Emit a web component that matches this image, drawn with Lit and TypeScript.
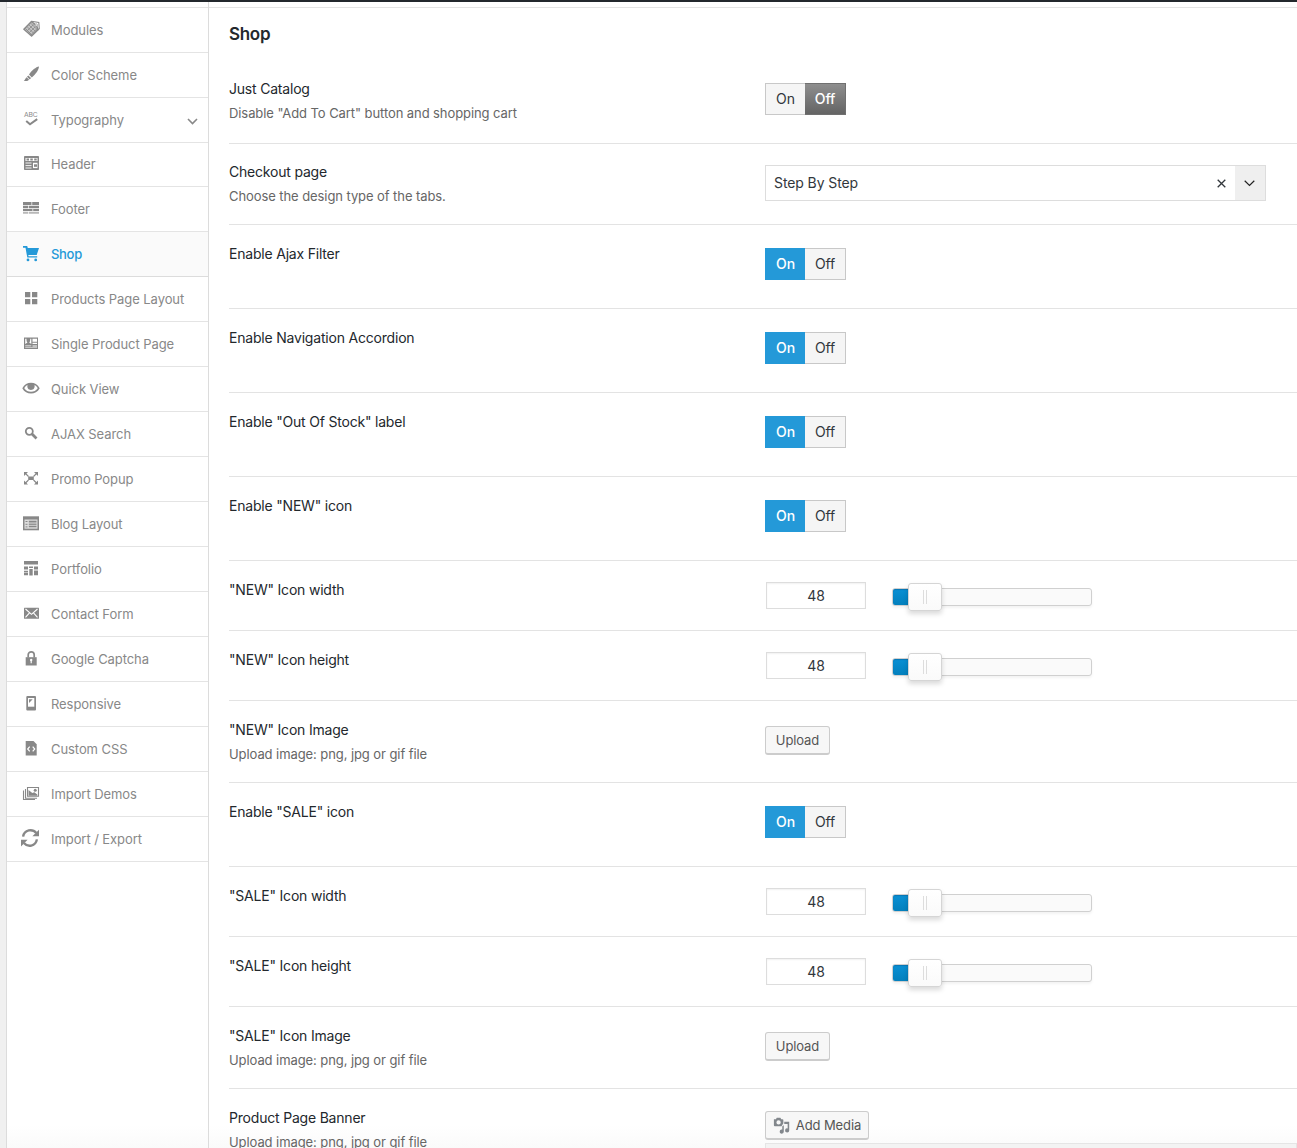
import { LitElement, html, svg, css } from "lit";
import { customElement, property } from "lit/decorators.js";
import { classMap } from "lit/directives/class-map.js";

const icons: Record<string, unknown> = {
  tag: svg`<path d="M2.900 10.300 10.500 2.500 15.500 6.500 17 10.600 10.600 17z" fill="#c4c4c4" stroke="#8a8a8a" stroke-width="1.500" stroke-linejoin="round"/><path d="M4.500 9.500l6.500 6.500M6.200 7.800l6.500 6.500M8 6l6.500 6.500M9.800 4.200l6.500 6.500M5.500 12.500l7-7M7.500 14.500l7-7M9.500 16.200l6.500-6.500" stroke="#8a8a8a" stroke-width=".8" fill="none"/><path d="M10.500 2.300l7.300 1.200.5 6.300-1.600 1.200" stroke="#8a8a8a" stroke-width="1.100" fill="none"/><circle cx="15.200" cy="6" r="1.200" fill="#fff" stroke="#8a8a8a" stroke-width=".7"/>`,
  brush: svg`<path d="M18 2.600C15 3 10.800 6.500 8 10.600L10.800 13.400C14.500 10.700 17.800 6 18 2.600zM7.300 11.400 10 14.100 8.800 15.400 6 12.800zM5.600 13.200 8 15.600C7 17.500 4.600 17.200 2.700 16.800 4 16.200 4.200 14.300 5.600 13.200z"/>`,
  abc: svg`<text x="2.900" y="7.900" font-size="6.200" textLength="13.800" lengthAdjust="spacingAndGlyphs" font-family="Inter, sans-serif">ABC</text><path d="M5.200 12 9 15.300 16.200 10.100" fill="none" stroke="currentColor" stroke-width="2"/>`,
  header: svg`<rect x="3" y="3" width="15" height="14" rx=".8"/><path d="M4.500 5h12v3h-12z" fill="#fff"/><path d="M5.500 6.500h2.500M9.300 6.500h2.500M13.200 6.500h2.500" stroke="currentColor" stroke-width="1.800"/><path d="M4.500 10h6M4.500 12.600h6M4.500 15h6" stroke="#fff" stroke-width=".9"/><path d="M12 9.800h4.500v5.300H12z" fill="#fff"/><path d="M13 11.300h3v2.500h-3z"/>`,
  footer: svg`<path d="M2 4h8.500v2.900H2zM11.200 4h6.800v2.900h-6.800zM2 7.700h5v2.500H2zM7.700 7.700H18v2.500H7.700zM2 11h9.500v2H2zM12.200 11H18v2h-5.800z"/><path d="M2 13.800h5v1.900H2zM7.700 13.800H18v1.900H7.700z" opacity=".6"/>`,
  cart: svg`<path d="M2 3h4.200l.6 2H18l-2.300 7H7.300l.3 1.200h8.600v1.400H6.300L4.500 4.700H2z"/><circle cx="7" cy="16.900" r="1.400"/><circle cx="14.700" cy="16.900" r="1.400"/>`,
  grid: svg`<path d="M4 4h5.300v5.300H4zM11 4h5.300v5.300H11zM4 11h5.300v5.300H4zM11 11h5.300v5.300H11z"/>`,
  product: svg`<path d="M3 4.500h14v11.500H3z"/><path d="M4.200 5.700h1.300c-.2 2 .3 3.200 1 3.800L4.200 11zM10.300 5.700H9.200c.1 2-.3 3.200-1 3.800l2.100 1.500zM11.500 5.700h4.500v3h-4.500zM11.500 9.800h4.500v1.300h-4.500zM4.200 12.500h6.100v.8H4.200zM11.500 12.400h4.500v1h-4.500zM4.200 14.400h11.800v.6H4.200z" fill="#fff"/>`,
  eye: svg`<path fill-rule="evenodd" d="M1.300 10.300C3.300 6.500 6.500 4.800 10 4.800s6.700 1.700 8.700 5.500C16.700 14 13.500 15.600 10 15.600S3.300 14 1.300 10.300zM3.300 10.200c1.500 2.500 4 3.500 6.700 3.500s5.200-1 6.700-3.500c-.8-1.500-1.900-2.500-3.200-3.100.6 3-.8 4.900-3.500 4.900S5.900 10.100 6.500 7.100C5.200 7.700 4.100 8.700 3.300 10.200z"/>`,
  search: svg`<circle cx="8.300" cy="8.300" r="3.500" fill="none" stroke="currentColor" stroke-width="1.800"/><path d="M10.800 10.800l4.700 4.700" stroke="currentColor" stroke-width="2.700"/>`,
  popup: svg`<path d="M7.200 8.500h5.600v3.600H7.200zM3 4h4L3 8zM17 4h-4l4 4zM3 16.500h4l-4-4zM17 16.500h-4l4-4z"/><path d="M4 5l3.500 3.500M16 5l-3.500 3.500M4 15.500 7.500 12M16 15.500 12.500 12" stroke="currentColor" stroke-width="1.100"/>`,
  blog: svg`<path d="M2 3.300h16v14H2z"/><path d="M3.500 6.500h13v9.200h-13z" fill="#ddd"/><path d="M4.500 8.500h2M4.500 11.300h2M4.500 13.900h2" stroke="currentColor" stroke-width="1"/><path d="M7.800 8.700h7.700M7.800 13.500h7.700" stroke="currentColor" stroke-width="1.700"/><path d="M7.800 11.200h7.700" stroke="currentColor" stroke-width="1.300"/>`,
  portfolio: svg`<path d="M3 3h14v3.600H3zM3 8.500h4v3H3zM8 8.500h4V10H8zM13 8.500h4v3h-4zM3 12.700h4v1.200H3zM8.300 11h3.400v6.400H8.300zM3 14.600h4v2.600H3zM13 12.600h4v4.600h-4z"/>`,
  mail: svg`<rect x="3" y="4.700" width="15" height="11" rx=".5"/><path d="M4.500 6l6 5.300 6-5.300M4.500 14.300l3.800-4.200M16.500 14.300l-3.800-4.200" fill="none" stroke="#fff" stroke-width="1.100"/>`,
  lock: svg`<path d="M4.700 9.200h11v8.300h-11z"/><path d="M7.200 9.500V6.800c0-4 6-4 6 0v2.700" fill="none" stroke="currentColor" stroke-width="1.700"/><circle cx="10.200" cy="12" r="1.200" fill="#fff"/><path d="M9.600 12h1.200v3.300H9.600z" fill="#fff"/>`,
  phone: svg`<rect x="5.300" y="3" width="9.700" height="14.500" rx="1"/><path d="M7 5h6.300v8.700H7z" fill="#fff"/><path d="M8 6.200h3.700L8 10z"/>`,
  code: svg`<path d="M4.700 3h7.800l3.200 3.200v11.300h-11z"/><path d="M8.700 8.700 6.700 11l2 2.300M11.700 8.700l2 2.300-2 2.300" fill="none" stroke="#fff" stroke-width="1.200"/>`,
  images: svg`<path d="M6.500 4.500h11v8.800h-11zM4.500 6v9.200h11.500M2.500 7.500v9h11.500" fill="none" stroke="currentColor" stroke-width="1.100"/><path d="M7.500 7l3.800 3 2-.8 3 2.300v1.200H7.500z"/><circle cx="14.200" cy="7.300" r="1.500"/>`,
  sync: svg`<path d="M2.100 8.600C3.300 1.500 11.500.5 15.300 5M15.900 11.400C14.600 18.500 6.700 19.500 2.900 15" fill="none" stroke="currentColor" stroke-width="2.400"/><path d="M18 1.700v6.600h-6.600zM0 18.400v-6.600h6.600z"/>`,
  media: svg`<path fill-rule="evenodd" d="M1 3.500h2.200L4.200 2h4l1 1.500h1.300c.6 0 1 .4 1 1V8l-2 3.300H2c-.6 0-1-.4-1-1zM6.200 4.700a2.400 2.400 0 1 0 0 4.800 2.400 2.400 0 0 0 0-4.800z"/><path d="M12.500 6.500H18V16a2.300 2.300 0 1 1-1.700-2.200V9h-3.800z"/><path d="M10.300 11.500 12 10.300v7a2.300 2.300 0 1 1-1.700-2.200z"/>`,
};

const menu: [string, string][] = [
  ["tag", "Modules"], ["brush", "Color Scheme"], ["abc", "Typography"], ["header", "Header"],
  ["footer", "Footer"], ["cart", "Shop"], ["grid", "Products Page Layout"], ["product", "Single Product Page"],
  ["eye", "Quick View"], ["search", "AJAX Search"], ["popup", "Promo Popup"], ["blog", "Blog Layout"],
  ["portfolio", "Portfolio"], ["mail", "Contact Form"], ["lock", "Google Captcha"], ["phone", "Responsive"],
  ["code", "Custom CSS"], ["images", "Import Demos"], ["sync", "Import / Export"],
];

interface Option { label: string; hint?: string; kind: "toggle" | "select" | "slider" | "upload" | "media"; off?: boolean; first?: boolean }

const upload = "Upload image: png, jpg or gif file";
const options: Option[] = [
  { label: "Just Catalog", hint: 'Disable "Add To Cart" button and shopping cart', kind: "toggle", off: true, first: true },
  { label: "Checkout page", hint: "Choose the design type of the tabs.", kind: "select" },
  { label: "Enable Ajax Filter", kind: "toggle" },
  { label: "Enable Navigation Accordion", kind: "toggle" },
  { label: 'Enable "Out Of Stock" label', kind: "toggle" },
  { label: 'Enable "NEW" icon', kind: "toggle" },
  { label: '"NEW" Icon width', kind: "slider" },
  { label: '"NEW" Icon height', kind: "slider" },
  { label: '"NEW" Icon Image', hint: upload, kind: "upload" },
  { label: 'Enable "SALE" icon', kind: "toggle" },
  { label: '"SALE" Icon width', kind: "slider" },
  { label: '"SALE" Icon height', kind: "slider" },
  { label: '"SALE" Icon Image', hint: upload, kind: "upload" },
  { label: "Product Page Banner", hint: upload, kind: "media" },
];

@customElement("ui-icon")
class UiIcon extends LitElement {
  @property() name = "";
  static styles = css`
    :host { display: block; width: 20px; height: 20px; flex: none; }
    svg { display: block; width: 100%; height: 100%; overflow: visible; }
  `;
  render() {
    return html`<svg viewBox="0 0 20 20" fill="currentColor">${icons[this.name]}</svg>`;
  }
}

@customElement("side-menu")
class SideMenu extends LitElement {
  static styles = css`
    :host { display: block; width: 201px; flex: none; border-left: 1px solid #dcdcdc; border-right: 1px solid #dcdcdc; background: linear-gradient(#fff 98%, #fafafa); }
    .item { height: 45px; box-sizing: border-box; border-bottom: 1px solid #e4e4e4; display: flex; align-items: center; padding: 0 10px 0 14px; font-size: 13px; color: #888; letter-spacing: -.07px; }
    .short { height: 44px; padding-bottom: 1px; }
    .active { color: #2499d8; background: #fafafa; border-bottom-color: #dcdcdc; font-weight: 500; letter-spacing: -.3px; }
    .icon { margin: -2px 10px 0 0; }
    .text { flex: 1; line-height: 20px; }
    .arrow { width: 11px; height: 7px; display: block; margin-top: 2px; }
    .top { height: 5px; border-bottom: 1px solid #e4e4e4; }
  `;
  render() {
    return html`<div class="top"></div>${menu.map(([icon, text]) => html`
      <div class=${classMap({ item: true, short: icon === "header", active: icon === "cart" })}>
        <ui-icon class="icon" name=${icon}></ui-icon><span class="text">${text}</span>
        ${icon === "abc" ? html`<svg class="arrow" viewBox="0 0 11 7"><path d="M1 1l4.500 4.500L10 1" fill="none" stroke="#888" stroke-width="1.600"/></svg>` : ""}
      </div>`)}`;
  }
}

@customElement("option-control")
class OptionControl extends LitElement {
  @property() kind = "";
  @property({ type: Boolean }) off = false;
  static styles = css`
    :host { display: block; color: #32373c; }
    .toggle { margin-top: 23px; width: 81px; height: 32px; display: grid; grid-template-columns: 40px 41px; font-size: 14px; letter-spacing: -.1px; }
    .seg { display: flex; align-items: center; justify-content: center; background: #f5f5f5; border: 1px solid #c8c8c8; color: #32373c; box-sizing: border-box; padding-bottom: 2px; }
    .seg:first-child { border-right: 0; }
    .seg:last-child { border-left: 0; }
    .blue { background: #2499d8; border-color: #2499d8; color: #fff; font-weight: 500; }
    .dark { background: linear-gradient(#8e8e8e, #646464); border-color: #707070; color: #fff; font-weight: 500; }
    .select { margin-top: 21px; width: 501px; height: 36px; box-sizing: border-box; border: 1px solid #ddd; display: flex; align-items: center; background: #fff; }
    .value { flex: 1; padding: 0 0 2px 8px; font-size: 14px; letter-spacing: -.1px; }
    .clear { width: 9px; height: 9px; margin: 1px 9px 0 0; }
    .drop { width: 30px; height: 34px; background: #efefef; display: flex; align-items: center; justify-content: center; }
    .drop svg { width: 11px; height: 7px; margin: 1px 1px 0 0; }
    .slider { margin: 21px 0 0 1px; display: flex; align-items: flex-start; }
    .field { width: 100px; height: 27px; box-sizing: border-box; border: 1px solid #ddd; background: #fff; box-shadow: inset 0 1px 2px rgba(0,0,0,.06); font-size: 14px; line-height: 25px; text-align: center; margin-right: 26px; }
    .track { width: 200px; height: 18px; margin-top: 6px; box-sizing: border-box; border: 1px solid #d0d0d0; border-radius: 3px; background: #fafafa; box-shadow: 0 2px 3px rgba(0,0,0,.05); display: flex; align-items: center; }
    .fill { width: 15px; height: 16px; border-radius: 2px 0 0 2px; background: linear-gradient(#0a90d4, #0380bd); box-shadow: inset 0 1px 1px rgba(0,60,110,.3); }
    .knob { width: 34px; height: 28px; box-sizing: border-box; background: linear-gradient(#fff, #fafafa); border: 1px solid #d5d5d5; border-radius: 3px; box-shadow: 0 3px 5px rgba(0,0,0,.15); display: flex; align-items: center; justify-content: center; }
    .grip { width: 2px; height: 14px; border: solid #ddd; border-width: 0 1px; }
    .button { box-sizing: border-box; display: flex; align-items: center; justify-content: center; height: 29px; border: 1px solid #ccc; border-bottom-width: 2px; border-radius: 3px; background: #f7f7f7; color: #555; font-size: 13px; letter-spacing: -.1px; }
    .upload { width: 65px; margin-top: 25px; }
    .media { width: 104px; margin-top: 22px; letter-spacing: -.1px; gap: 5px; }
    .media ui-icon { width: 18px; height: 18px; color: #82878c; }
    .editor { margin-top: 3px; height: 30px; border: 1px solid #e5e5e5; background: #f3f3f3; }
  `;
  render() {
    switch (this.kind) {
      case "toggle": return html`<div class="toggle"><span class=${classMap({ seg: true, blue: !this.off })}>On</span><span class=${classMap({ seg: true, dark: this.off })}>Off</span></div>`;
      case "select": return html`<div class="select"><span class="value">Step By Step</span>
        <svg class="clear" viewBox="0 0 9 9"><path d="M.7.7l7.600 7.600M8.300.7.7 8.300" stroke="#32373c" stroke-width="1.300"/></svg>
        <span class="drop"><svg viewBox="0 0 11 7"><path d="M.7.8l4.800 4.700L10.300.8" fill="none" stroke="#222" stroke-width="1.200"/></svg></span></div>`;
      case "slider": return html`<div class="slider"><div class="field">48</div><div class="track"><div class="fill"></div><div class="knob"><div class="grip"></div></div></div></div>`;
      case "upload": return html`<div class="button upload">Upload</div>`;
      default: return html`<div class="button media"><ui-icon name="media"></ui-icon>Add Media</div><div class="editor"></div>`;
    }
  }
}

@customElement("app-root")
class AppRoot extends LitElement {
  static styles = css`
    :host { display: block; height: 1148px; overflow: hidden; background: #fff; font-family: Inter, sans-serif; font-size: 14px; color: #23282d; }
    .bar { height: 2px; background: #23282d; }
    .page { display: flex; height: 1146px; background: #f0f0f0; padding-left: 6px; }
    .main { flex: 1; background: linear-gradient(#fff 98%, #fafafa); min-width: 0; }
    .top { height: 5px; border-bottom: 1px solid #e4e4e4; }
    .body { padding-left: 20px; }
    .title { margin: 0; height: 52px; font-size: 17px; line-height: 52px; font-weight: 600; letter-spacing: -.3px; }
    .row { display: grid; grid-template-columns: 536px 1fr; box-sizing: border-box; border-bottom: 1px solid #e3e3e3; height: 84px; }
    .select { height: 81px; }
    .slider { height: 70px; }
    .upload { height: 82px; }
    .first { height: 84px; }
    .label { padding-top: 19px; line-height: 20px; letter-spacing: -.2px; }
    .select .label { padding-top: 18px; }
    .hint { font-size: 13px; line-height: 20px; margin-top: 4px; color: #666; letter-spacing: -.08px; }
  `;
  render() {
    return html`<div class="bar"></div><div class="page"><side-menu></side-menu>
      <main class="main"><div class="top"></div><div class="body"><h1 class="title">Shop</h1>
        ${options.map((o) => html`<section class=${classMap({ row: true, [o.kind]: true, first: !!o.first })}>
          <div class="label">${o.label}${o.hint ? html`<div class="hint">${o.hint}</div>` : ""}</div>
          <option-control kind=${o.kind} ?off=${o.off}></option-control>
        </section>`)}
      </div></main></div>`;
  }
}
